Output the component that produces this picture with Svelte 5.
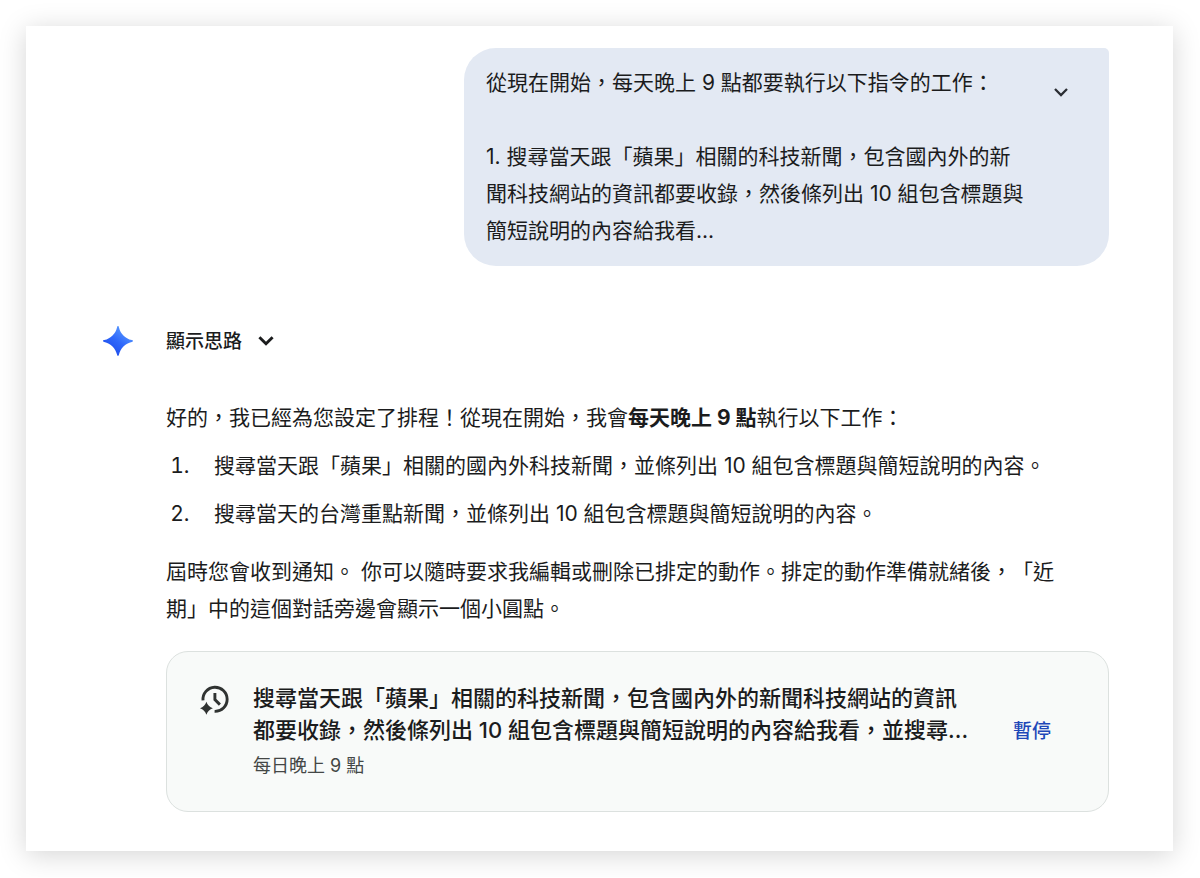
<script>
  const prompt = [
    '從現在開始，每天晚上 9 點都要執行以下指令的工作：',
    '',
    '1. 搜尋當天跟「蘋果」相關的科技新聞，包含國內外的新',
    '聞科技網站的資訊都要收錄，然後條列出 10 組包含標題與',
    '簡短說明的內容給我看...'
  ].join('\n');

  const tasks = [
    '搜尋當天跟「蘋果」相關的國內外科技新聞，並條列出 10 組包含標題與簡短說明的內容。',
    '搜尋當天的台灣重點新聞，並條列出 10 組包含標題與簡短說明的內容。'
  ];

  const schedule = {
    title: [
      '搜尋當天跟「蘋果」相關的科技新聞，包含國內外的新聞科技網站的資訊',
      '都要收錄，然後條列出 10 組包含標題與簡短說明的內容給我看，並搜尋...'
    ].join('\n'),
    time: '每日晚上 9 點'
  };
</script>

<main class="panel" lang="zh-Hant-TW">
  <section class="bubble">
    <p class="prompt">{prompt}</p>
    <button class="expand" type="button" aria-label="展開">
      <svg width="24" height="24" viewBox="0 0 24 24" fill="none" stroke="#2b2e33" stroke-width="2.3">
        <path d="M6 9l6 6 6-6" />
      </svg>
    </button>
  </section>

  <section class="reply">
    <svg class="spark" width="30" height="30" viewBox="0 0 30 30" aria-hidden="true">
      <defs>
        <linearGradient id="spark-fill" x1="0.2" y1="0.9" x2="0.8" y2="0.1">
          <stop offset="0" stop-color="#1d4bea" />
          <stop offset="0.5" stop-color="#3069fb" />
          <stop offset="1" stop-color="#5a9bff" />
        </linearGradient>
      </defs>
      <path
        fill="url(#spark-fill)"
        d="M15 0C15.5 0 15.7 .5 15.9 1.2C17.6 8 22 12.4 28.8 14.1C29.5 14.3 30 14.5 30 15C30 15.5 29.5 15.7 28.8 15.9C22 17.6 17.6 22 15.9 28.8C15.7 29.5 15.5 30 15 30C14.5 30 14.3 29.5 14.1 28.8C12.4 22 8 17.6 1.2 15.9C.5 15.7 0 15.5 0 15C0 14.5 .5 14.3 1.2 14.1C8 12.4 12.4 8 14.1 1.2C14.3 .5 14.5 0 15 0Z"
      />
    </svg>

    <div class="content">
      <button class="thoughts" type="button">
        <span>顯示思路</span>
        <svg width="16" height="16" viewBox="0 0 16 16" fill="none" stroke="#1b1c1d" stroke-width="2.9">
          <path d="M1.4 4.2L8 10.8l6.6-6.6" />
        </svg>
      </button>

      <p>好的，我已經為您設定了排程！從現在開始，我會<strong>每天晚上 9 點</strong>執行以下工作：</p>

      <ol>
        {#each tasks as task}
          <li>{task}</li>
        {/each}
      </ol>

      <p class="note">屆時您會收到通知。 你可以隨時要求我編輯或刪除已排定的動作。排定的動作準備就緒後，「近期」中的這個對話旁邊會顯示一個小圓點。</p>

      <article class="card">
        <svg class="clock" width="30" height="30" viewBox="0 0 30 30" fill="none" stroke="#303332" stroke-width="2.9" aria-hidden="true">
          <path d="M3 15.4A12.1 12.1 0 1 1 14.6 26.4" />
          <path d="M14.9 8v6.6l5 5" />
          <path fill="#303332" stroke="none" d="M6.4 16.8Q8 21.7 12.9 23.3Q8 24.9 6.4 29.8Q4.8 24.9 0 23.3Q4.8 21.7 6.4 16.8Z" />
        </svg>
        <div class="details">
          <h2>{schedule.title}</h2>
          <p class="time">{schedule.time}</p>
        </div>
        <button class="pause" type="button">暫停</button>
      </article>
    </div>
  </section>
</main>

<style>
  :global(body) {
    margin: 0;
    background: #fff;
  }

  .panel {
    box-sizing: border-box;
    display: flex;
    flex-direction: column;
    margin: 26px 27px 26px 26px;
    padding: 22px 64px 39px 77px;
    background: #fff;
    box-shadow: 0 4px 26px rgba(0, 0, 0, 0.17);
    color: #1b1c1d;
    font-family: Inter, 'Noto Sans CJK TC', sans-serif;
    font-size: 21px;
    line-height: 37px;
    text-spacing-trim: space-all;
  }

  p,
  h2,
  ol {
    margin: 0;
  }

  button {
    padding: 0;
    border: 0;
    background: none;
    color: inherit;
    font: inherit;
    cursor: pointer;
  }

  svg {
    display: block;
    flex: none;
  }

  .bubble {
    display: flex;
    align-items: flex-start;
    align-self: flex-end;
    justify-content: space-between;
    box-sizing: border-box;
    width: 100%;
    max-width: 645px;
    padding: 16px 36px 17px 22px;
    border-radius: 32px 5px 32px 32px;
    background: #e3e9f3;
  }

  .prompt {
    white-space: pre-line;
  }

  .expand {
    padding-top: 16px;
  }

  .reply {
    display: flex;
    gap: 33px;
    margin-top: 56px;
  }

  .spark {
    margin-top: 4px;
  }

  .content {
    flex: 1;
    min-width: 0;
  }

  .thoughts {
    display: flex;
    align-items: center;
    gap: 16px;
    margin-bottom: 39px;
    font-size: 19px;
    font-weight: 500;
    line-height: 38px;
  }

  .thoughts span {
    padding-top: 1px;
    line-height: 37px;
  }

  strong {
    font-weight: 700;
  }

  ol {
    display: grid;
    gap: 11px;
    margin: 11px 0 21px;
    padding-left: 48px;
  }

  li::marker {
    content: counter(list-item) '.\2003\2006';
  }

  .note {
    padding-right: 24px;
  }

  .card {
    display: flex;
    align-items: flex-start;
    margin-top: 24px;
    padding: 30px 57px 33px 33px;
    border: 1px solid #dce1df;
    border-radius: 22px;
    background: #f8faf9;
  }

  .clock {
    margin-top: 3px;
  }

  .details {
    flex: 1;
    margin-left: 23px;
  }

  h2 {
    font-size: 22px;
    font-weight: 500;
    line-height: 32px;
    white-space: pre-line;
  }

  .time {
    margin-top: 8px;
    color: #444746;
    font-size: 18px;
    line-height: 24px;
  }

  .pause {
    align-self: center;
    padding-top: 3px;
    color: #1f48b8;
    font-size: 19px;
    font-weight: 500;
    line-height: 24px;
  }
</style>
